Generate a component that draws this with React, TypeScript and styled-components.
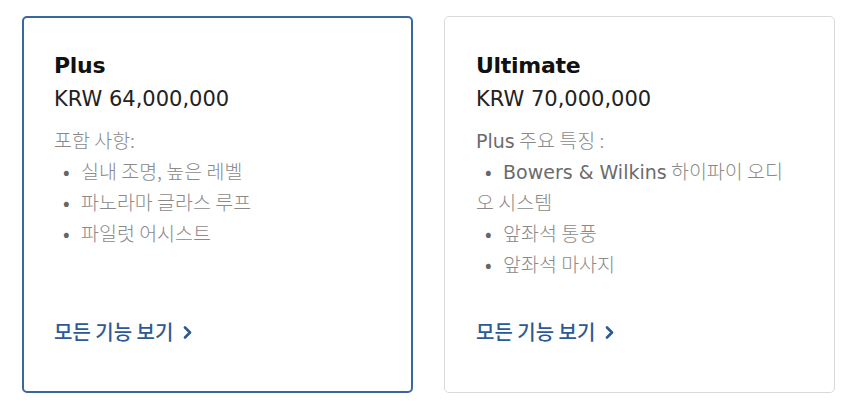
import React from "react";
import styled, { createGlobalStyle } from "styled-components";

const GlobalStyle = createGlobalStyle`
  html, body { margin: 0; padding: 0; background: #ffffff; }
  body { font-family: "DejaVu Sans", "Noto Sans CJK KR", sans-serif; }
`;

const Row = styled.div`
  display: flex;
  gap: 31px;
  padding: 16px 0 0 22px;
`;

const Card = styled.div<{ $selected?: boolean }>`
  box-sizing: border-box;
  width: 391px;
  height: 377px;
  display: flex;
  flex-direction: column;
  border-radius: 5px;
  border: ${(p) => (p.$selected ? "2px solid #3a67a2" : "1px solid #d9d9d9")};
  padding: ${(p) => (p.$selected ? "34px 40px 47px 30px" : "35px 41px 48px 31px")};
`;

const Title = styled.h2`
  margin: 0;
  font-family: "DejaVu Sans", "Noto Sans CJK KR", sans-serif;
  font-weight: 700;
  font-size: 22px;
  line-height: 28px;
  letter-spacing: -0.3px;
  color: #111111;
`;

const Price = styled.div`
  margin-top: 5px;
  font-family: "DejaVu Sans", "Noto Sans CJK KR", sans-serif;
  font-size: 21px;
  line-height: 28px;
  color: #222222;
`;

const Features = styled.div`
  margin-top: 11px;
  font-family: "Noto Sans CJK KR", sans-serif;
  font-size: 19.5px;
  line-height: 31px;
  color: #8a8a8a;
  font-weight: 300;
`;

const Latin = styled.span`
  font-family: "DejaVu Sans", sans-serif;
  font-size: 19px;
  line-height: 1;
  font-weight: 400;
  color: #6b6b6b;
`;

const List = styled.ul`
  margin: 0;
  padding: 0;
  list-style: none;
`;

const Item = styled.li`
  &::before {
    content: "•";
    display: inline-block;
    line-height: 1;
    width: 18px;
    margin-left: 9px;
    color: #666666;
    font-weight: 400;
  }
`;

const Link = styled.a`
  margin-top: auto;
  display: inline-flex;
  align-items: center;
  gap: 10px;
  font-size: 20px;
  line-height: 24px;
  font-weight: 500;
  color: #2d5a94;
  text-decoration: none;
  font-family: "Noto Sans CJK KR", sans-serif;
`;

const Chevron = () => (
  <svg width="9" height="13" viewBox="0 0 9 13" fill="none">
    <polyline points="2,1.5 7,6.5 2,11.5" stroke="#2d5a94" strokeWidth="2.6" strokeLinecap="round" strokeLinejoin="round" />
  </svg>
);

export default function App() {
  return (
    <>
      <GlobalStyle />
      <Row>
        <Card $selected>
          <Title>Plus</Title>
          <Price>KRW 64,000,000</Price>
          <Features>
            <div>포함 사항:</div>
            <List>
              <Item>실내 조명, 높은 레벨</Item>
              <Item>파노라마 글라스 루프</Item>
              <Item>파일럿 어시스트</Item>
            </List>
          </Features>
          <Link href="#">
            모든 기능 보기 <Chevron />
          </Link>
        </Card>
        <Card>
          <Title>Ultimate</Title>
          <Price>KRW 70,000,000</Price>
          <Features>
            <div>
              <Latin>Plus</Latin> 주요 특징 :
            </div>
            <List>
              <Item>
                <Latin>Bowers &amp; Wilkins</Latin> 하이파이 오디오 시스템
              </Item>
              <Item>앞좌석 통풍</Item>
              <Item>앞좌석 마사지</Item>
            </List>
          </Features>
          <Link href="#">
            모든 기능 보기 <Chevron />
          </Link>
        </Card>
      </Row>
    </>
  );
}
